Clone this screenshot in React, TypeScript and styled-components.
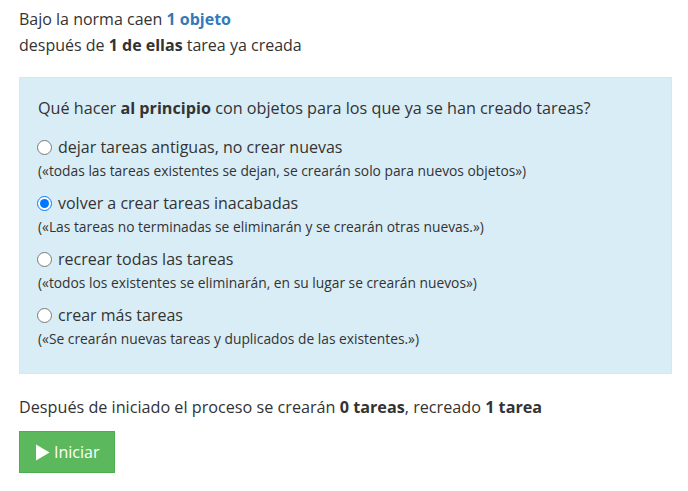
import styled, { createGlobalStyle } from "styled-components"

const Global = createGlobalStyle`
body{
    margin: 0;
    background: #fff;
    font-family: "Open Sans", "Liberation Sans", sans-serif;
    color: #333;
}
`

const options = [
    {label: "dejar tareas antiguas, no crear nuevas", hint: "(«todas las tareas existentes se dejan, se crearán solo para nuevos objetos»)"},
    {label: "volver a crear tareas inacabadas", hint: "(«Las tareas no terminadas se eliminarán y se crearán otras nuevas.»)"},
    {label: "recrear todas las tareas", hint: "(«todos los existentes se eliminarán, en su lugar se crearán nuevos»)"},
    {label: "crear más tareas", hint: "(«Se crearán nuevas tareas y duplicados de las existentes.»)"},
]

const App = ()=>{
    return(
        <Page>
            <Global/>
            <Info>
                <Line>Bajo la norma caen <Link>1 objeto</Link></Line>
                <Line>después de <b>1 de ellas</b> tarea ya creada</Line>
            </Info>
            <Panel>
                <Question>Qué hacer <b>al principio</b> con objetos para los que ya se han creado tareas?</Question>
                {options.map((o, i)=>(
                    <Option key={i}>
                        <Label>
                            <Radio type="radio" name="mode" defaultChecked={i === 1}/>
                            {o.label}
                        </Label>
                        <Hint>{o.hint}</Hint>
                    </Option>
                ))}
            </Panel>
            <Summary>Después de iniciado el proceso se crearán <b>0 tareas</b>, recreado <b>1 tarea</b></Summary>
            <StartButton>
                <svg width="15" height="17" viewBox="0 0 15 17">
                    <path d="M1 0.5 L14.5 8.5 L1 16.5 Z" fill="#fff"/>
                </svg>
                Iniciar
            </StartButton>
        </Page>
    )
}

export default App;

const Page = styled.div`
padding: 6px 16px 0 19px;
font-size: 16px;
b{
    font-weight: 700;
}
`
const Info = styled.div`
display: flex;
flex-direction: column;
`
const Line = styled.div`
line-height: 26px;
`
const Link = styled.b`
color: #337ab7;
`
const Panel = styled.div`
margin-top: 19px;
background-color: #d9edf7;
border: 1px solid #d2e9f4;
padding: 18px 18px 24px 17px;
`
const Question = styled.div`
font-size: 16.2px;
line-height: 24px;
margin: 0 0 15px 1px;
`
const Option = styled.div`
display: flex;
flex-direction: column;
gap: 2px;
margin-bottom: 10px;
&:last-child{
    margin-bottom: 0;
}
`
const Label = styled.label`
display: flex;
align-items: center;
gap: 6px;
line-height: 24px;
`
const Radio = styled.input`
width: 15px;
height: 15px;
margin: 0;
`
const Hint = styled.div`
font-size: 13.8px;
line-height: 20px;
margin-left: 1px;
`
const Summary = styled.div`
margin-top: 21px;
font-size: 16.2px;
line-height: 24px;
`
const StartButton = styled.button`
margin-top: 12px;
display: flex;
align-items: center;
gap: 4px;
height: 42px;
padding: 0 15px;
background-color: #5cb85c;
border: 1px solid #4cae4c;
border-radius: 0;
color: #fff;
font-family: inherit;
font-size: 16px;
cursor: pointer;
`
